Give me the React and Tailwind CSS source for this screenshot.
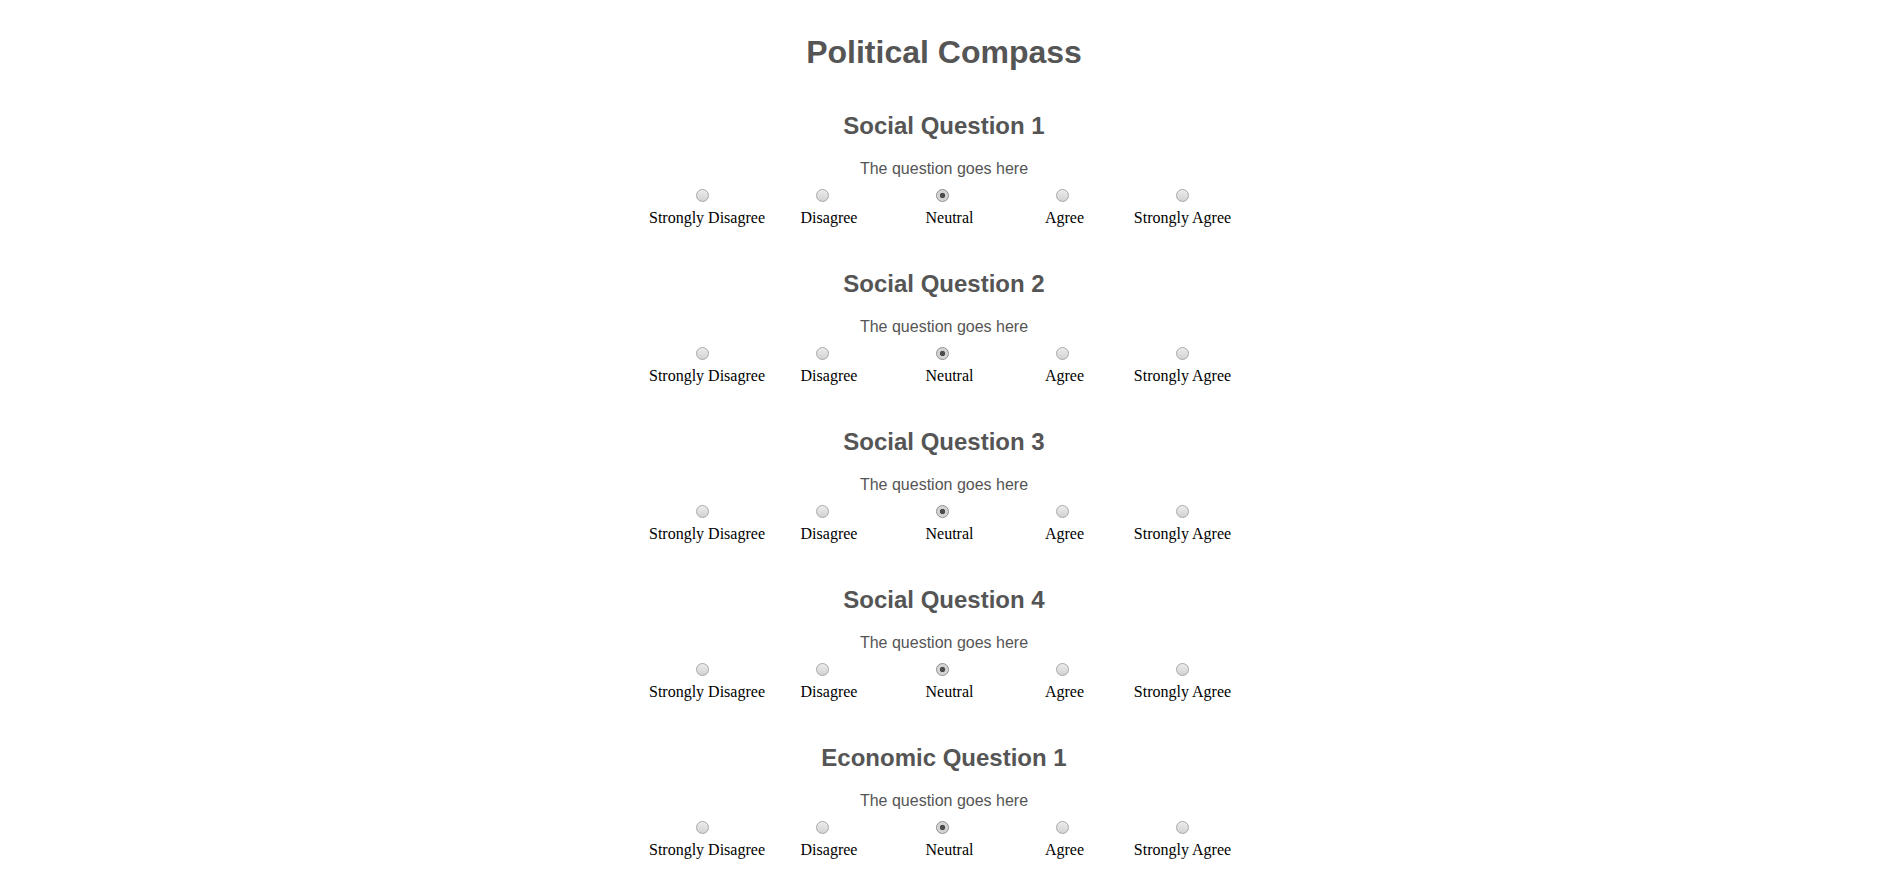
import React, { useState } from 'react';

const OPTIONS = ['Strongly Disagree', 'Disagree', 'Neutral', 'Agree', 'Strongly Agree'];

const QUESTIONS = [
    { id: 'social-1', title: 'Social Question 1', text: 'The question goes here' },
    { id: 'social-2', title: 'Social Question 2', text: 'The question goes here' },
    { id: 'social-3', title: 'Social Question 3', text: 'The question goes here' },
    { id: 'social-4', title: 'Social Question 4', text: 'The question goes here' },
    { id: 'economic-1', title: 'Economic Question 1', text: 'The question goes here' },
];

const Question = ({ question, value, onChange }) => (
    <section className="flex flex-col items-center">
        <h2 className="text-[24px] leading-[28px] font-bold text-[#555]">{question.title}</h2>
        <p className="mt-[20px] text-[16px] leading-[18px] text-[#555]">{question.text}</p>

        {/* Radios */}
        <div className="mt-[11px] mr-[4px] grid grid-cols-[repeat(5,120px)]">
            {OPTIONS.map((opt, i) => (
                <div key={opt} className="flex justify-center">
                    <input
                        type="radio"
                        id={`${question.id}-${i}`}
                        name={question.id}
                        checked={value === i}
                        onChange={() => onChange(i)}
                        className="m-0 block h-[13px] w-[13px] cursor-pointer appearance-none rounded-full border border-[#a8a8a8] bg-linear-to-b from-[#ededed] to-[#d2d2d2] checked:border-[#8c8c8c] checked:bg-[radial-gradient(circle,#4d4d4d_0,#4d4d4d_2.4px,#cfcfcf_3px,#dcdcdc_6px)]"
                    />
                </div>
            ))}
        </div>

        {/* Labels */}
        <div className="mt-[7px] ml-[3px] grid grid-cols-[123px_121px_120px_110px_126px]">
            {OPTIONS.map((opt, i) => (
                <label
                    key={opt}
                    htmlFor={`${question.id}-${i}`}
                    className="cursor-pointer whitespace-nowrap text-center font-['Liberation_Serif','Times_New_Roman',serif] text-[16px] leading-[18px] text-black"
                >
                    {opt}
                </label>
            ))}
        </div>
    </section>
);

const App = () => {
    const [answers, setAnswers] = useState(() =>
        Object.fromEntries(QUESTIONS.map(q => [q.id, 2]))
    );

    return (
        <div className="min-h-screen bg-white pr-[7px] pb-[40px] font-['Liberation_Sans',Arial,sans-serif]">
            <h1 className="pt-[34px] text-center text-[32px] leading-[37px] font-bold text-[#555]">Political Compass</h1>

            <div className="mt-[41px] flex flex-col gap-[43px]">
                {QUESTIONS.map(q => (
                    <Question
                        key={q.id}
                        question={q}
                        value={answers[q.id]}
                        onChange={v => setAnswers(prev => ({ ...prev, [q.id]: v }))}
                    />
                ))}
            </div>
        </div>
    );
};

export default App;
